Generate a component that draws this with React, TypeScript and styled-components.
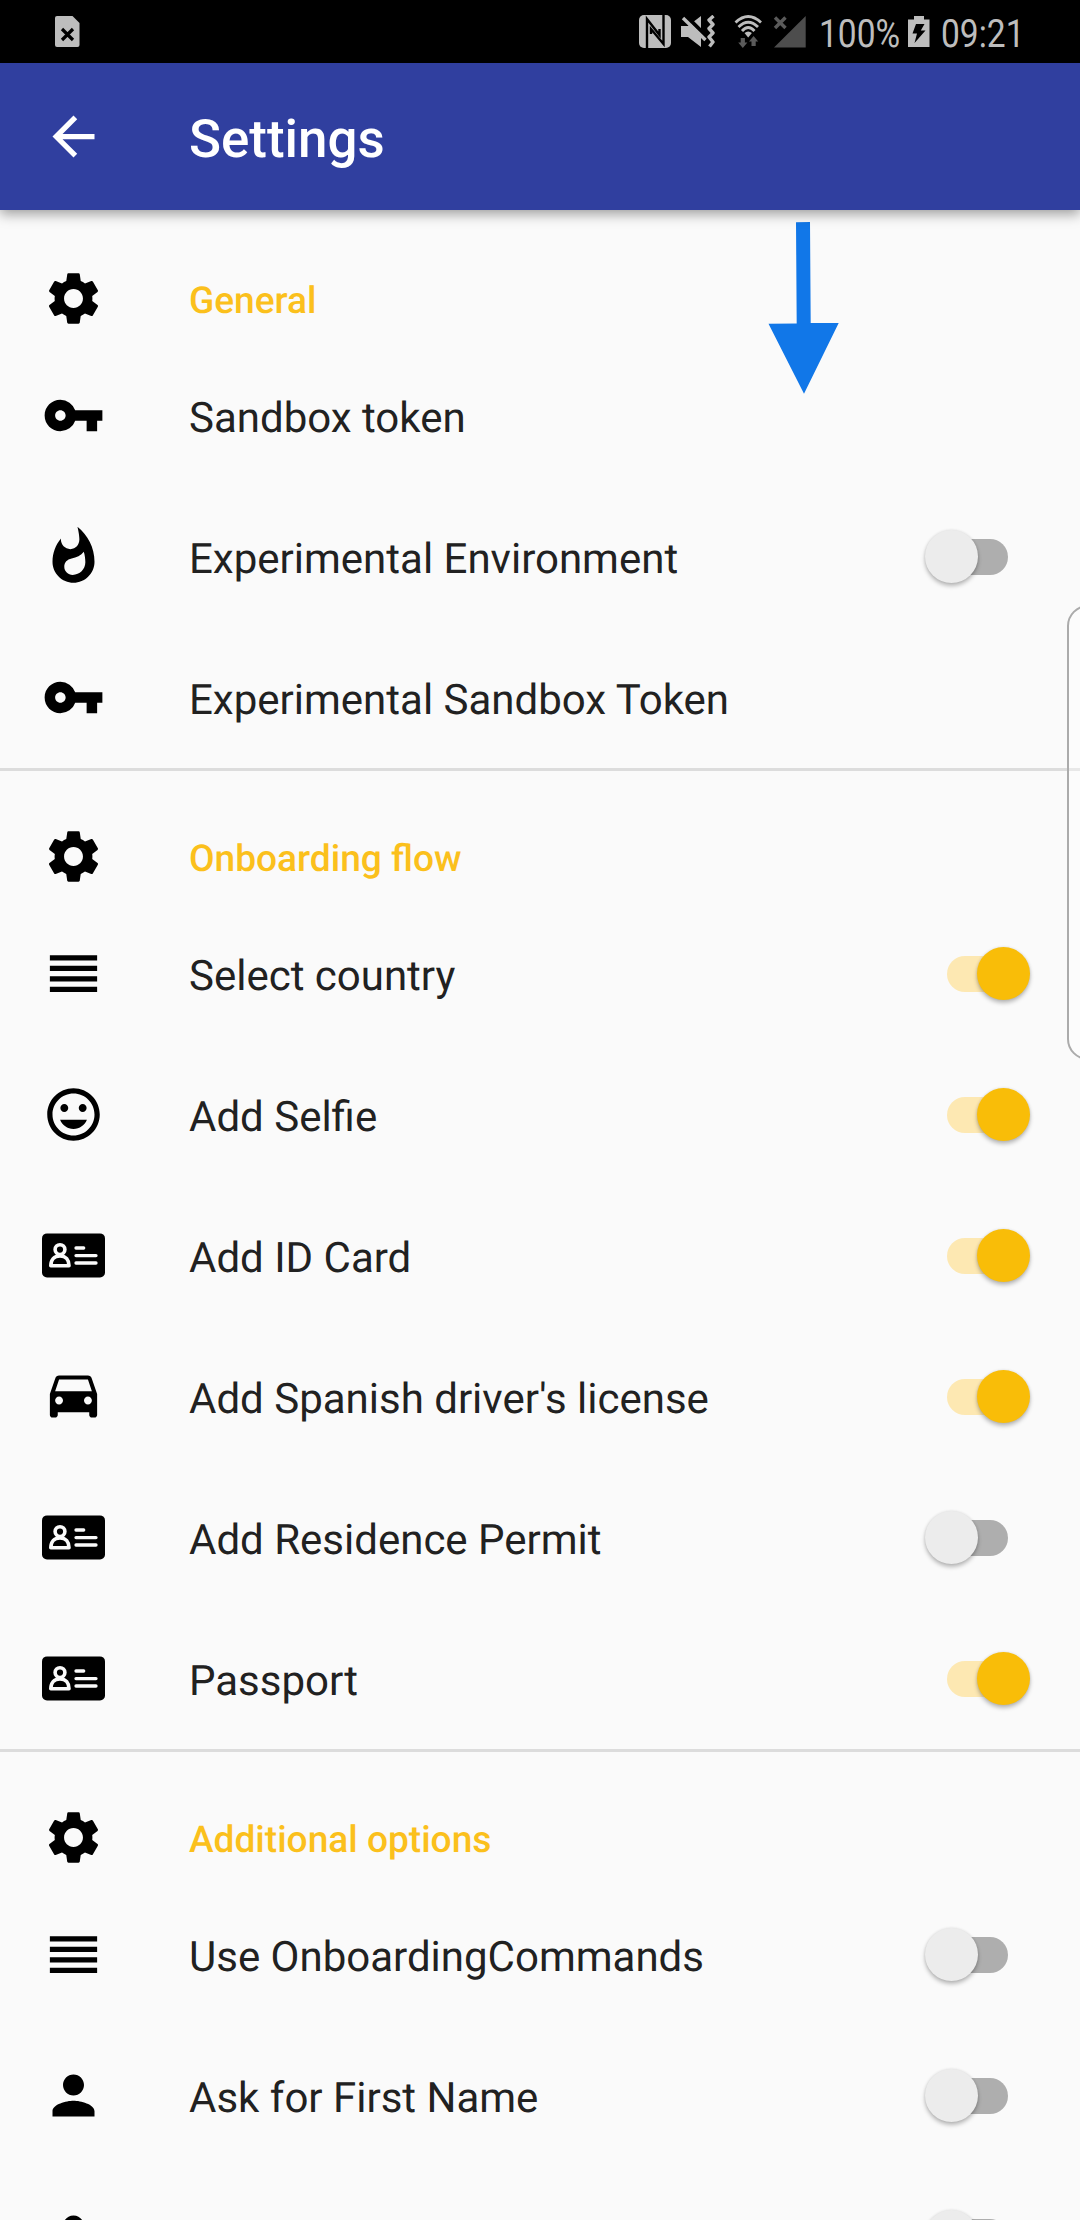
import React from "react";
import styled, { createGlobalStyle } from "styled-components";
import type { IconType } from "react-icons";
import {
  MdArrowBack,
  MdMood,
  MdPerson,
  MdReorder,
  MdSettings,
  MdVpnKey,
  MdWhatshot,
} from "react-icons/md";

const GlobalStyle = createGlobalStyle`
  *, *::before, *::after { box-sizing: border-box; }
  html, body { margin: 0; padding: 0; background: #fafafa; }
  body {
    font-family: Roboto, "Noto Sans", sans-serif;
    text-rendering: geometricPrecision;
  }
`;

const Screen = styled.div`
  position: relative;
  display: flex;
  flex-direction: column;
  width: 1080px;
  height: 2220px;
  overflow: hidden;
  background: #fafafa;
`;

const StatusBar = styled.div`
  flex: none;
  display: flex;
  align-items: center;
  justify-content: space-between;
  height: 63px;
  padding: 0 57px 0 54px;
  background: #000;
  color: #bdbdbd;
`;

const StatusGroup = styled.div`
  display: flex;
  align-items: center;
  height: 63px;
`;

const StatusIcon = styled.svg<{ $gap?: number }>`
  flex: none;
  display: block;
  margin-left: ${(p) => p.$gap ?? 0}px;
`;

const StatusText = styled.span<{ $gap: number; $width: number }>`
  flex: none;
  display: block;
  width: ${(p) => p.$width}px;
  margin-left: ${(p) => p.$gap}px;
  font-size: 39px;
  line-height: 44px;
  padding-top: 4px;
  white-space: nowrap;
  span {
    display: inline-block;
    transform: scaleX(0.86);
    transform-origin: left center;
  }
`;

const AppBar = styled.header`
  flex: none;
  z-index: 1;
  display: flex;
  align-items: center;
  height: 147px;
  padding-left: 42px;
  background: #303f9f;
  color: #fff;
  box-shadow: 0 4px 12px rgba(0, 0, 0, 0.38);
`;

const BackButton = styled.button`
  display: flex;
  width: 147px;
  padding: 0;
  border: 0;
  background: none;
  color: inherit;
`;

const Title = styled.h1`
  margin: 0;
  padding-top: 5px;
  font-size: 52.9px;
  line-height: 62px;
  font-weight: 500;
`;

const List = styled.main`
  flex: none;
  display: flex;
  flex-direction: column;
  padding-top: 3px;
`;

const Section = styled.section`
  display: flex;
  flex-direction: column;
  & + & {
    border-top: 3px solid #dcdcdc;
  }
`;

const SectionHeader = styled.div`
  display: flex;
  align-items: center;
  height: 132px;
  padding: 39px 0 0 42px;
`;

const SectionTitle = styled.h2`
  margin: 0;
  padding-top: 7px;
  font-size: 37.1px;
  line-height: 44px;
  font-weight: 500;
  color: #fbc01c;
`;

const Row = styled.div`
  display: flex;
  align-items: center;
  height: 141px;
  padding: 0 50px 0 42px;
`;

const IconSlot = styled.div`
  flex: none;
  display: flex;
  width: 147px;
  color: #000;
`;

const Label = styled.span`
  flex: 1;
  padding-top: 7px;
  font-size: 42px;
  line-height: 50px;
  color: #212121;
  white-space: nowrap;
`;

const Switch = styled.span<{ $on: boolean }>`
  flex: none;
  display: flex;
  align-items: center;
  justify-content: center;
  width: 105px;
  height: 53px;
  &::before {
    content: "";
    width: 61px;
    height: 36px;
    border-radius: 18px;
    background: ${(p) => (p.$on ? "#fde8b2" : "#aeaeae")};
  }
`;

const Thumb = styled.span<{ $on: boolean }>`
  flex: none;
  width: 53px;
  height: 53px;
  margin: 0 ${(p) => (p.$on ? "-22px 0 -31px" : "-31px 0 -22px")};
  border-radius: 50%;
  background: ${(p) => (p.$on ? "#f9bd08" : "#ececec")};
  box-shadow: 0 3px 4px rgba(0, 0, 0, 0.26), 0 0 3px rgba(0, 0, 0, 0.1);
  order: ${(p) => (p.$on ? 1 : -1)};
  z-index: 1;
`;

const EdgeHandle = styled.div`
  position: absolute;
  top: 605px;
  right: -30px;
  width: 43px;
  height: 455px;
  border: 2px solid #ababab;
  border-radius: 21px;
  background: rgba(255, 255, 255, 0.35);
`;

const PointerArrow = styled.svg`
  position: absolute;
  left: 768px;
  top: 222px;
`;

function IdCard() {
  return (
    <svg width="63" height="63" viewBox="0 0 63 63" fill="none">
      <rect x="0" y="9.400" width="63" height="44" rx="5" fill="#000" />
      <g stroke="#fafafa" strokeLinecap="round" strokeLinejoin="round">
        <g strokeWidth="3.600">
          <circle cx="18" cy="25.600" r="4.900" />
          <path d="M8.800 41.800 C8.800 36 12 32 18 32 C24 32 27 36 27 41.800 Z" />
        </g>
        <path d="M34 24 H41.700 M34 31.600 H54 M34 39 H54" strokeWidth="3.300" />
      </g>
    </svg>
  );
}

function Car() {
  return (
    <svg width="63" height="63" viewBox="0 1 24 24" fill="currentColor">
      <path d="M18.920 6.010C18.720 5.420 18.160 5 17.500 5h-11c-.66 0-1.210.42-1.420 1.010L3 12v8c0 .55.45 1 1 1h1c.55 0 1-.45 1-1v-1h12v1c0 .55.45 1 1 1h1c.55 0 1-.45 1-1v-8l-2.080-5.990zM6.500 16c-.83 0-1.500-.67-1.500-1.500S5.670 13 6.500 13s1.500.67 1.500 1.500S7.330 16 6.500 16zm11 0c-.83 0-1.500-.67-1.500-1.500s.67-1.500 1.500-1.500 1.500.67 1.500 1.500-.67 1.500-1.500 1.500zM5 11l1.500-4.500h11L19 11H5z" />
    </svg>
  );
}

type Item = { label: string; icon: IconType | typeof IdCard; on?: boolean };

const sections: { title: string; items: Item[] }[] = [
  {
    title: "General",
    items: [
      { label: "Sandbox token", icon: MdVpnKey },
      { label: "Experimental Environment", icon: MdWhatshot, on: false },
      { label: "Experimental Sandbox Token", icon: MdVpnKey },
    ],
  },
  {
    title: "Onboarding flow",
    items: [
      { label: "Select country", icon: MdReorder, on: true },
      { label: "Add Selfie", icon: MdMood, on: true },
      { label: "Add ID Card", icon: IdCard, on: true },
      { label: "Add Spanish driver's license", icon: Car, on: true },
      { label: "Add Residence Permit", icon: IdCard, on: false },
      { label: "Passport", icon: IdCard, on: true },
    ],
  },
  {
    title: "Additional options",
    items: [
      { label: "Use OnboardingCommands", icon: MdReorder, on: false },
      { label: "Ask for First Name", icon: MdPerson, on: false },
      { label: "", icon: MdPerson, on: false },
    ],
  },
];

function Toggle({ on }: { on: boolean }) {
  return (
    <Switch $on={on} role="switch" aria-checked={on}>
      <Thumb $on={on} />
    </Switch>
  );
}

function StatusIcons() {
  return (
    <StatusGroup>
      <StatusIcon width="32" height="33" viewBox="0 0 32 33">
        <rect width="32" height="33" rx="5" fill="#bdbdbd" />
        <g fill="none" stroke="#000" strokeWidth="2.400">
          <path d="M8 33 V4 L20.500 20 V14" />
          <path d="M24.500 0 V29 L12 14 V19" />
        </g>
      </StatusIcon>
      <StatusIcon $gap={10} width="36" height="33" viewBox="0 0 36 33">
        <path d="M0 11 H7 L20 1 V32 L7 22 H0 Z" fill="#bdbdbd" />
        <path d="M3 -1 L28 24" stroke="#000" strokeWidth="4" />
        <path d="M2 3 L24.500 25" stroke="#bdbdbd" strokeWidth="3.400" />
        <path
          d="M32.500 1 L28 5 L32 9.500 L28 13.500 L32 18 L28 22 L32 27 L28.500 31.500"
          fill="none"
          stroke="#bdbdbd"
          strokeWidth="3.400"
          strokeLinejoin="round"
        />
      </StatusIcon>
      <StatusIcon $gap={17} width="30" height="33" viewBox="-0.500 0 30 33">
        <g fill="none" stroke="#bdbdbd" strokeWidth="2.800">
          <path d="M1 7.500 Q13.700 -4.500 26.500 7.500" />
          <path d="M4 12 Q13.700 2.500 23.500 12" />
          <path d="M7.500 16 Q13.700 9 20 16" />
        </g>
        <path d="M10 18 Q13.700 15 17.400 18 L13.700 22.500 Z" fill="#bdbdbd" />
        <path
          d="M6.200 23 h4.200 v4.500 h2.500 l-4.600 5.500 l-4.600 -5.500 h2.500 Z M17 31 h4.200 v-4.500 h2.500 l-4.600 -5.500 l-4.600 5.500 h2.500 Z"
          fill="#5a5a5a"
        />
      </StatusIcon>
      <StatusIcon $gap={9} width="34" height="33" viewBox="0 0 34 33">
        <path d="M32.700 1 V32.500 H1 Z" fill="#4d4d4d" />
        <path d="M2 2.500 L12.500 13 M12.500 2.500 L2 13" stroke="#5a5a5a" strokeWidth="3.400" />
      </StatusIcon>
      <StatusText $gap={12} $width={81}><span>100%</span></StatusText>
      <StatusIcon $gap={8} width="22" height="31" viewBox="0 0 22 31">
        <path d="M6 0 H16 V3.500 H21.500 V31 H0 V3.500 H6 Z" fill="#bdbdbd" />
        <path d="M8 8 H16.500 L12.800 14.500 H17.500 L6.500 27 L9 17.500 H4.500 Z" fill="#000" />
      </StatusIcon>
      <StatusText $gap={11} $width={82}><span>09:21</span></StatusText>
    </StatusGroup>
  );
}

export default function App() {
  return (
    <>
      <GlobalStyle />
      <Screen>
        <StatusBar>
          <StatusIcon width="26" height="31" viewBox="0 0 26 31">
            <path d="M3 0 H18.500 L25.500 7 V29 Q25.500 31 23.500 31 H3 Q1 31 1 29 V2 Q1 0 3 0 Z" fill="#bdbdbd" />
            <path d="M8 13 L19 24 M19 13 L8 24" stroke="#000" strokeWidth="3.200" />
          </StatusIcon>
          <StatusIcons />
        </StatusBar>
        <AppBar>
          <BackButton aria-label="Back">
            <MdArrowBack size={63} />
          </BackButton>
          <Title>Settings</Title>
        </AppBar>
        <List>
          {sections.map((section) => (
            <Section key={section.title}>
              <SectionHeader>
                <IconSlot>
                  <MdSettings size={63} />
                </IconSlot>
                <SectionTitle>{section.title}</SectionTitle>
              </SectionHeader>
              {section.items.map(({ label, icon: Icon, on }, index) => (
                <Row key={index}>
                  <IconSlot>
                    <Icon size={63} />
                  </IconSlot>
                  <Label>{label}</Label>
                  {on !== undefined && <Toggle on={on} />}
                </Row>
              ))}
            </Section>
          ))}
        </List>
        <EdgeHandle />
        <PointerArrow width="72" height="172" viewBox="0 0 72 172">
          <path d="M28 0.200 L42 0 L42.700 101 L70.700 101 L36 171.700 L0.500 101.800 L28.700 101.500 Z" fill="#1177e8" />
        </PointerArrow>
      </Screen>
    </>
  );
}
